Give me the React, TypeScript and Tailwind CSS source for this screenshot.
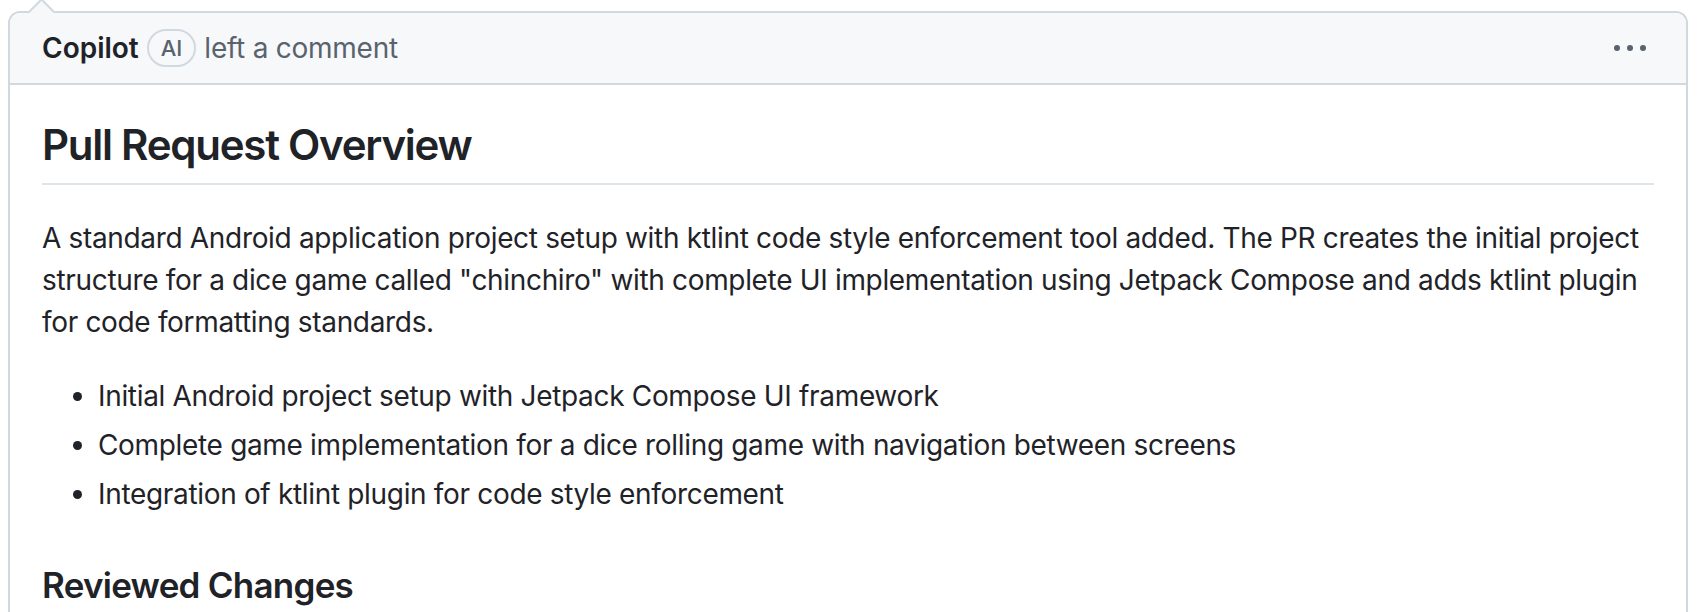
import React from "react";

export default function App() {
  return (
    <div className="min-h-screen bg-white pt-[11px] pl-[8px] pr-[12px] font-['Inter',sans-serif] text-[#1f2328]">
      <div className="relative min-h-[720px] rounded-t-[12px] border-2 border-b-0 border-[#d1d9e0]">
        <div className="absolute left-[22px] top-[-11.5px] h-[19px] w-[19px] rotate-45 border-l-2 border-t-2 border-[#d1d9e0] bg-[#f6f8fa]" />
        <div className="flex h-[72px] items-center rounded-t-[10px] border-b-2 border-[#d1d9e0] bg-[#f6f8fa] pl-[32px] pr-[32px] text-[28px]">
          <span className="font-semibold text-[#1f2328]">Copilot</span>
          <span className="ml-[8px] inline-flex h-[38px] items-center rounded-full border-2 border-[#d1d9e0] px-[12px] text-[22px] font-medium text-[#59636e]">
            AI
          </span>
          <span className="ml-[8px] tracking-[-0.25px] text-[#59636e]">left a comment</span>
          <div className="ml-auto mr-[8px] flex items-center">
            <svg width="32" height="8" viewBox="0 0 32 8" fill="#59636e">
              <circle cx="3" cy="4" r="3" />
              <circle cx="16" cy="4" r="3" />
              <circle cx="29" cy="4" r="3" />
            </svg>
          </div>
        </div>
        <div className="px-[32px] pt-[32px] text-[28px] leading-[42px] tracking-[-0.33px]">
          <h2 className="mb-[32px] border-b-2 border-[#d1d9e0b3] pt-[2px] pb-[11px] text-[42px] font-semibold leading-[52.5px] tracking-[-1.25px]">
            Pull Request Overview
          </h2>
          <p className="mb-[32px]">
            A standard Android application project setup with ktlint code style enforcement tool added. The PR creates the initial project structure for a dice game called "chinchiro" with complete UI implementation using Jetpack Compose and adds ktlint plugin for code formatting standards.
          </p>
          <ul className="mb-[32px] list-disc pl-[56px]">
            <li>Initial Android project setup with Jetpack Compose UI framework</li>
            <li className="mt-[7px]">Complete game implementation for a dice rolling game with navigation between screens</li>
            <li className="mt-[7px]">Integration of ktlint plugin for code style enforcement</li>
          </ul>
          <h3 className="mt-[48px] text-[35px] font-semibold leading-[44px] tracking-[-0.75px]">Reviewed Changes</h3>
        </div>
      </div>
    </div>
  );
}
